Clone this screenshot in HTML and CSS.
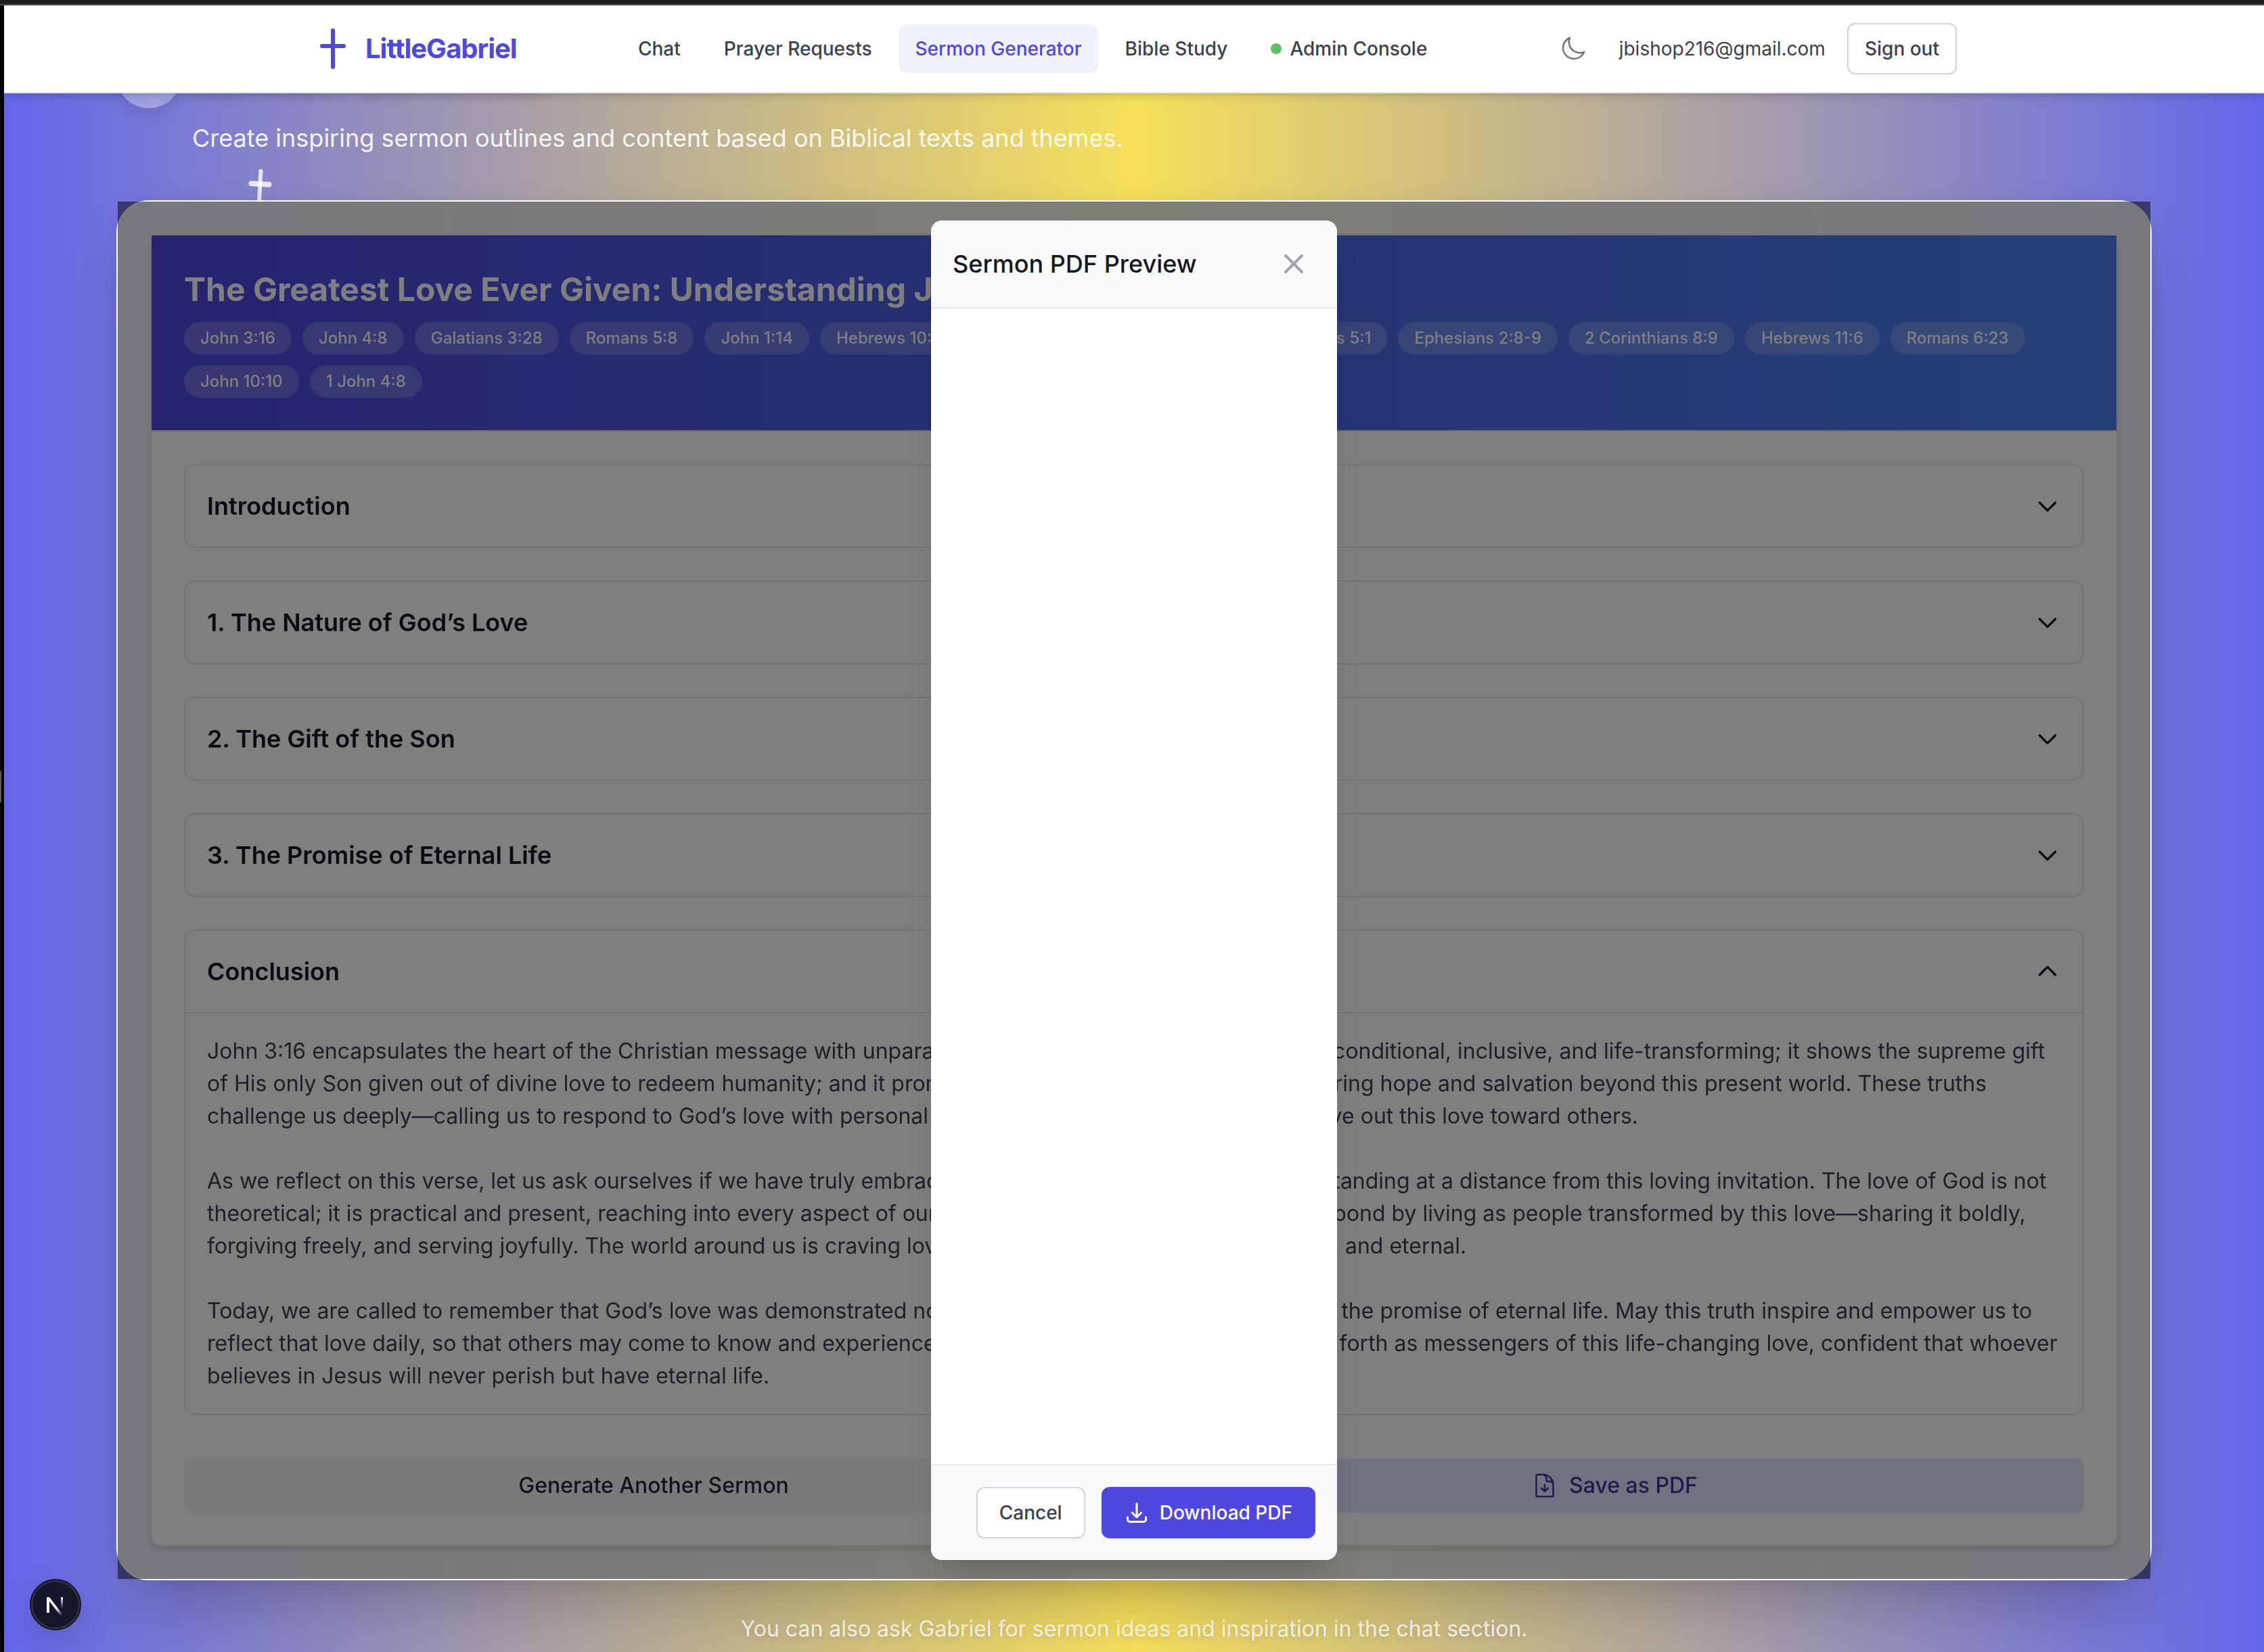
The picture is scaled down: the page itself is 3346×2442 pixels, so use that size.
FILE: index.html
```html
<!DOCTYPE html>
<html lang="en">
<head>
<meta charset="utf-8">
<title>LittleGabriel – Sermon Generator</title>
<link rel="stylesheet" href="styles.css">
</head>
<body>
<div class="window-top"></div>
<div class="app">
  <header class="site-header">
    <div class="site-header-inner">
      <a class="brand" href="#">
        <svg class="brand-icon" viewBox="0 0 64 64" aria-hidden="true"><path d="M32 5v54M16 28h32" /><path class="cross-core" d="M30 25h4l1 3-1 3h-4l-1-3z" /></svg>
        <span>LittleGabriel</span>
      </a>
      <nav class="nav">
        <a href="#">Chat</a>
        <a href="#">Prayer Requests</a>
        <a href="#" class="active" aria-current="page">Sermon Generator</a>
        <a href="#">Bible Study</a>
        <a href="#"><span class="dot"></span>Admin Console</a>
      </nav>
      <div class="account">
        <button class="icon-button" type="button" aria-label="Dark mode">
          <svg viewBox="0 0 24 24" aria-hidden="true"><path d="M21.752 15.002A9.72 9.72 0 0118 15.75c-5.385 0-9.75-4.365-9.75-9.75 0-1.33.266-2.597.748-3.752A9.753 9.753 0 003 11.25C3 16.635 7.365 21 12.75 21a9.753 9.753 0 009.002-5.998z"/></svg>
        </button>
        <span class="email">jbishop216@gmail.com</span>
        <button class="button button-outline button-compact" type="button">Sign out</button>
      </div>
    </div>
  </header>

  <main class="main">
    <div class="hero">
      <div class="hero-title">
        <span class="hero-badge"></span>
        <h1>Sermon Generator</h1>
      </div>
      <p>Create inspiring sermon outlines and content based on Biblical texts and themes.</p>
      <svg class="hero-cross" viewBox="0 0 64 64" aria-hidden="true"><path d="M32 5v54" /><path class="bar" d="M19 24h26" /></svg>
    </div>

    <div class="panel">
      <article class="sermon">
        <header class="sermon-header">
          <h2>The Greatest Love Ever Given: Understanding John 3:16</h2>
          <ul class="chips">
            <li>John 3:16</li>
            <li>John 4:8</li>
            <li>Galatians 3:28</li>
            <li>Romans 5:8</li>
            <li>John 1:14</li>
            <li>Hebrews 10:23</li>
            <li>Romans 3:23</li>
            <li>Romans 10:9</li>
            <li>Romans 5:1</li>
            <li>Ephesians 2:8-9</li>
            <li>2 Corinthians 8:9</li>
            <li>Hebrews 11:6</li>
            <li>Romans 6:23</li>
            <li>John 10:10</li>
            <li>1 John 4:8</li>
          </ul>
        </header>
        <div class="sermon-body">
          <section class="fold">
            <button class="fold-toggle" type="button" aria-expanded="false"><span>Introduction</span><svg viewBox="0 0 24 24" aria-hidden="true"><path d="M19 9l-7 7-7-7"/></svg></button>
          </section>
          <section class="fold">
            <button class="fold-toggle" type="button" aria-expanded="false"><span>1. The Nature of God’s Love</span><svg viewBox="0 0 24 24" aria-hidden="true"><path d="M19 9l-7 7-7-7"/></svg></button>
          </section>
          <section class="fold">
            <button class="fold-toggle" type="button" aria-expanded="false"><span>2. The Gift of the Son</span><svg viewBox="0 0 24 24" aria-hidden="true"><path d="M19 9l-7 7-7-7"/></svg></button>
          </section>
          <section class="fold">
            <button class="fold-toggle" type="button" aria-expanded="false"><span>3. The Promise of Eternal Life</span><svg viewBox="0 0 24 24" aria-hidden="true"><path d="M19 9l-7 7-7-7"/></svg></button>
          </section>
          <section class="fold">
            <button class="fold-toggle" type="button" aria-expanded="true"><span>Conclusion</span><svg viewBox="0 0 24 24" aria-hidden="true"><path d="M5 15l7-7 7 7"/></svg></button>
            <div class="fold-content">
              <p>John 3:16 encapsulates the heart of the Christian message with unparalleled grace—it reveals God’s love is unconditional, inclusive, and life-transforming; it shows the supreme gift of His only Son given out of divine love to redeem humanity; and it promises everlasting life to the faithful, offering hope and salvation beyond this present world. These truths challenge us deeply—calling us to respond to God’s love with personal faith, repentance, and the courage to live out this love toward others.</p>
              <p>As we reflect on this verse, let us ask ourselves if we have truly embraced God’s gift or we have been simply standing at a distance from this loving invitation. The love of God is not theoretical; it is practical and present, reaching into every aspect of our daily lives. We are called to openly respond by living as people transformed by this love—sharing it boldly, forgiving freely, and serving joyfully. The world around us is craving love that is good, authentic, unconditional, and eternal.</p>
              <p>Today, we are called to remember that God’s love was demonstrated not just in words but through His Son and the promise of eternal life. May this truth inspire and empower us to reflect that love daily, so that others may come to know and experience the fullness of His grace. May we step forth as messengers of this life-changing love, confident that whoever believes in Jesus will never perish but have eternal life.</p>
            </div>
          </section>
          <div class="sermon-actions">
            <button class="action" type="button">Generate Another Sermon</button>
            <button class="action action-save" type="button"><svg viewBox="0 0 24 24" aria-hidden="true"><path d="M19.5 14.25v-2.625a3.375 3.375 0 00-3.375-3.375h-1.5A1.125 1.125 0 0113.5 7.125v-1.5a3.375 3.375 0 00-3.375-3.375H8.25m.75 12l3 3m0 0l3-3m-3 3v-6m-1.5-9H5.625c-.621 0-1.125.504-1.125 1.125v17.25c0 .621.504 1.125 1.125 1.125h12.75c.621 0 1.125-.504 1.125-1.125V11.25a9 9 0 00-9-9z"/></svg>Save as PDF</button>
          </div>
        </div>
      </article>

      <div class="overlay">
        <div class="modal" role="dialog" aria-modal="true" aria-labelledby="modal-title">
          <div class="modal-header">
            <h3 id="modal-title">Sermon PDF Preview</h3>
            <button class="close-button" type="button" aria-label="Close"><svg viewBox="0 0 24 24" aria-hidden="true"><path d="M6 18L18 6M6 6l12 12"/></svg></button>
          </div>
          <div class="modal-body"></div>
          <div class="modal-footer">
            <button class="button button-outline" type="button">Cancel</button>
            <button class="button button-primary" type="button"><svg viewBox="0 0 24 24" aria-hidden="true"><path d="M3 16.5v2.25A2.25 2.25 0 005.25 21h13.5A2.25 2.25 0 0021 18.75V16.5M16.5 12L12 16.5m0 0L7.5 12m4.5 4.5V3"/></svg>Download PDF</button>
          </div>
        </div>
      </div>
    </div>

    <p class="hint">You can also ask Gabriel for sermon ideas and inspiration in the chat section.</p>
  </main>
</div>
<span class="edge-handle"></span>
<button class="dev-badge" type="button" aria-label="Developer tools">
  <svg viewBox="0 0 76 76" aria-hidden="true">
    <defs>
      <linearGradient id="fade-a" gradientUnits="userSpaceOnUse" x1="40" y1="42" x2="48" y2="54"><stop stop-color="#fff"/><stop offset="1" stop-color="#fff" stop-opacity="0"/></linearGradient>
      <linearGradient id="fade-b" gradientUnits="userSpaceOnUse" x1="47" y1="27" x2="47" y2="44"><stop stop-color="#fff"/><stop offset="1" stop-color="#fff" stop-opacity="0"/></linearGradient>
    </defs>
    <path d="M25 27h4l20 26-3 2-17-22v17h-4z" fill="url(#fade-a)"/>
    <path d="M46 27h3v17h-3z" fill="url(#fade-b)"/>
  </svg>
</button>
</body>
</html>
```
FILE: styles.css
```css
* { box-sizing: border-box; }

html { background: #000; }

body {
  margin: 0;
  min-height: 100vh;
  display: flex;
  flex-direction: column;
  padding-left: 6px;
  background: #000;
  color: #131826;
  font-family: Inter, "Liberation Sans", sans-serif;
  font-size: 32px;
  line-height: 48px;
}

h1, h2, h3, p, ul { margin: 0; padding: 0; }

button { font: inherit; color: inherit; border: 0; background: none; padding: 0; cursor: pointer; }

a { color: inherit; text-decoration: none; }

svg { display: block; fill: none; stroke: currentColor; stroke-linecap: round; stroke-linejoin: round; }

.window-top {
  height: 8px;
  margin-left: -6px;
  background: #1e1e1e;
  border-bottom: 2px solid #4c4a4d;
}

.app {
  flex: 1;
  background: linear-gradient(to right, #6467eb, #f7e05a 50%, #6467eb);
}

/* Site header */
.site-header {
  position: sticky;
  top: 0;
  z-index: 5;
  background: #fff;
  border-bottom: 2px solid #e5e7eb;
  box-shadow: 0 8px 12px -2px rgba(0, 0, 0, .1), 0 4px 8px -4px rgba(0, 0, 0, .1);
}

.site-header-inner {
  max-width: 2560px;
  height: 128px;
  margin: 0 auto;
  padding: 0 64px;
  display: flex;
  align-items: center;
  justify-content: space-between;
}

.brand {
  display: flex;
  align-items: center;
  gap: 16px;
  color: #4f48df;
  font-size: 40px;
  font-weight: 700;
  letter-spacing: -1px;
  line-height: 56px;
}

.brand-icon { width: 64px; height: 64px; stroke-width: 6; }
.brand-icon .cross-core { fill: currentColor; stroke-width: 2; }

.nav { display: flex; gap: 16px; }

.nav a {
  display: flex;
  align-items: center;
  padding: 16px 24px;
  border-radius: 12px;
  color: #394150;
  font-size: 28px;
  font-weight: 500;
  line-height: 40px;
}

.nav .active { background: #eff2fe; color: #4f48df; }

.dot { width: 16px; height: 16px; margin-right: 12px; border-radius: 50%; background: #5fc166; }

.account { display: flex; align-items: center; gap: 32px; font-size: 28px; line-height: 40px; color: #394150; }

.icon-button { padding: 16px; color: #6c7280; }
.icon-button svg { width: 40px; height: 40px; stroke-width: 1.5; }

.button {
  display: flex;
  align-items: center;
  gap: 16px;
  padding: 16px 32px;
  border: 2px solid transparent;
  border-radius: 12px;
  font-size: 28px;
  font-weight: 500;
  line-height: 40px;
  box-shadow: 0 2px 4px rgba(0, 0, 0, .05);
}

.button svg { width: 36px; height: 36px; stroke-width: 2; }
.button-compact { padding: 16px 24px; }
.button-outline { background: #fff; border-color: #d2d5db; color: #394150; }
.button-primary { background: #4f48df; border-color: #4f48df; color: #fff; }

/* Page */
.main { padding: 0 166px; }

.hero { position: relative; margin-top: -74px; padding-bottom: 64px; color: #fff; }

.hero-title { display: flex; align-items: center; gap: 16px; margin-bottom: 16px; }

.hero-badge {
  width: 96px;
  height: 96px;
  border-radius: 50%;
  background: rgba(255, 255, 255, .3);
  box-shadow: 0 8px 24px rgba(0, 0, 0, .1);
}

.hero h1 { font-size: 60px; line-height: 72px; text-shadow: 0 8px 16px rgba(0, 0, 0, .15); }

.hero p { padding-left: 112px; font-size: 36px; line-height: 56px; opacity: .9; }

.hero-cross {
  position: absolute;
  left: 180px;
  top: 184px;
  width: 64px;
  height: 64px;
  color: rgba(255, 255, 255, .8);
  stroke-width: 6;
  transform: rotate(3deg);
}
.hero-cross .bar { stroke-width: 8; }

.panel {
  position: relative;
  padding: 48px;
  border: 2px solid #fbfbfd;
  border-radius: 48px;
  background: rgba(255, 255, 255, .9);
  backdrop-filter: blur(16px);
  box-shadow: 0 50px 100px -24px rgba(0, 0, 0, .25), 0 0 40px rgba(0, 0, 0, .05);
}

.sermon {
  border: 2px solid #e5e7eb;
  border-radius: 16px;
  background: #fff;
  box-shadow: 0 8px 12px -2px rgba(0, 0, 0, .1), 0 4px 8px -4px rgba(0, 0, 0, .1);
}

.sermon-header {
  padding: 48px;
  border-bottom: 2px solid #e5e7eb;
  background: linear-gradient(to right, #4f48df, #4980ef);
  background-clip: padding-box;
  color: #fff;
}

.sermon-header h2 { font-size: 48px; font-weight: 700; line-height: 64px; }

.chips { display: flex; flex-wrap: wrap; gap: 16px; margin-top: 16px; list-style: none; }

.chips li {
  padding: 8px 24px;
  border-radius: 24px;
  background: rgba(255, 255, 255, .2);
  font-size: 24px;
  font-weight: 500;
  line-height: 32px;
}

.sermon-body { display: flex; flex-direction: column; gap: 48px; padding: 48px; }

.fold { border: 2px solid #e5e7eb; border-radius: 16px; }

.fold-toggle {
  width: 100%;
  display: flex;
  align-items: center;
  justify-content: space-between;
  padding: 32px;
  font-size: 36px;
  font-weight: 600;
  line-height: 56px;
}

.fold-toggle svg { width: 40px; height: 40px; stroke-width: 2; }

.fold-content {
  display: flex;
  flex-direction: column;
  gap: 48px;
  padding: 32px;
  border-top: 2px solid #e5e7eb;
  color: #394150;
}

.sermon-actions { display: grid; grid-template-columns: 1fr 1fr; gap: 32px; margin-top: 16px; }

.action {
  display: flex;
  align-items: center;
  justify-content: center;
  gap: 16px;
  padding: 16px 32px;
  border-radius: 12px;
  background: #f3f4f6;
  color: #212936;
  font-weight: 500;
}

.action svg { width: 40px; height: 40px; stroke-width: 1.5; }
.action-save { background: #e1e6fe; color: #3a34a0; }

.hint {
  margin-top: 48px;
  text-align: center;
  color: rgba(255, 255, 255, .9);
  text-shadow: 0 4px 8px rgba(0, 0, 0, .1);
}

/* Dialog */
.overlay {
  position: absolute;
  inset: 0;
  display: flex;
  justify-content: center;
  padding: 28px 32px;
  background: rgba(0, 0, 0, .5);
}

.modal {
  width: 600px;
  display: flex;
  flex-direction: column;
  overflow: hidden;
  border-radius: 16px;
  background: #fff;
  box-shadow: 0 40px 50px -10px rgba(0, 0, 0, .1), 0 16px 20px -12px rgba(0, 0, 0, .1);
}

.modal-header {
  display: flex;
  align-items: center;
  justify-content: space-between;
  padding: 32px;
  border-bottom: 2px solid #e5e7eb;
  background: #f9fafc;
}

.modal-header h3 { font-size: 36px; font-weight: 500; line-height: 56px; }

.close-button { padding: 8px; color: #9fa3ae; }
.close-button svg { width: 48px; height: 48px; stroke-width: 2; }

.modal-body { flex: 1; }

.modal-footer {
  display: flex;
  justify-content: flex-end;
  gap: 24px;
  padding: 32px;
  border-top: 2px solid #e5e7eb;
  background: #f9fafc;
}

/* Things pinned to the window */
.edge-handle {
  position: fixed;
  left: 0;
  top: 1139px;
  width: 2px;
  height: 48px;
  border-radius: 0 2px 2px 0;
  background: #5a5a5a;
}

.dev-badge {
  position: fixed;
  left: 44px;
  bottom: 32px;
  width: 76px;
  height: 76px;
  border: 2px solid #15151f;
  border-radius: 50%;
  background: #15152c;
  box-shadow: inset 0 0 0 2px #3b3b4d, 0 16px 48px rgba(0, 0, 0, .15);
}

.dev-badge svg { margin: -2px; width: 76px; height: 76px; stroke: none; }
```
